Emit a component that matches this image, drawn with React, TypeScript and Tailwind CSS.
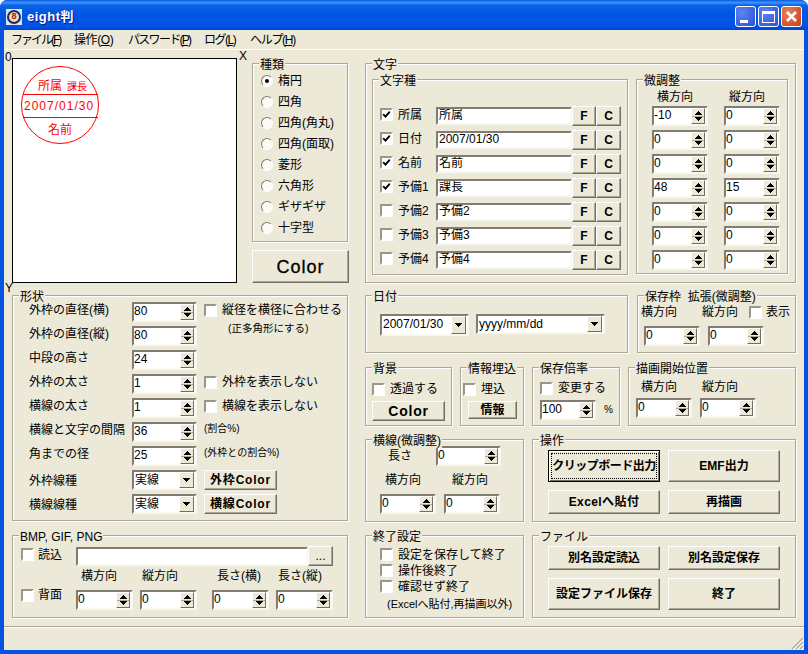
import type { ReactNode } from "react";

const RADIOS = ["楕円", "四角", "四角(角丸)", "四角(面取)", "菱形", "六角形", "ギザギザ", "十字型"];

const TEXT_ROWS = [
  { label: "所属", value: "所属", on: true, x: "-10", y: "0" },
  { label: "日付", value: "2007/01/30", on: true, x: "0", y: "0" },
  { label: "名前", value: "名前", on: true, x: "0", y: "0" },
  { label: "予備1", value: "課長", on: true, x: "48", y: "15" },
  { label: "予備2", value: "予備2", on: false, x: "0", y: "0" },
  { label: "予備3", value: "予備3", on: false, x: "0", y: "0" },
  { label: "予備4", value: "予備4", on: false, x: "0", y: "0" },
];

const SHAPE_ROWS = [
  { label: "外枠の直径(横)", value: "80" },
  { label: "外枠の直径(縦)", value: "80" },
  { label: "中段の高さ", value: "24" },
  { label: "外枠の太さ", value: "1" },
  { label: "横線の太さ", value: "1" },
  { label: "横線と文字の間隔", value: "36" },
  { label: "角までの径", value: "25" },
];

function Group({ title, className, children }: { title: string; className: string; children?: ReactNode }) {
  return (
    <div className={`relative shrink-0 border border-[#aca899] shadow-[inset_1px_1px_0_#fff,1px_1px_0_#fff] ${className}`}>
      <span className="absolute left-[6px] top-[-6px] bg-[#ece9d8] px-[1px] whitespace-pre">{title}</span>
      {children}
    </div>
  );
}

function Checkbox({ on = false, className = "" }: { on?: boolean; className?: string }) {
  return (
    <span className={`block h-[13px] w-[13px] shrink-0 border-2 border-t-[#9a978a] border-l-[#9a978a] border-r-white border-b-white bg-white ${className}`}>
      {on && (
        <svg width="9" height="9" viewBox="0 0 9 9" className="block">
          <path d="M1.2 4.2 L3.5 6.6 L7.8 1.6" fill="none" stroke="#000" strokeWidth="1.9" />
        </svg>
      )}
    </span>
  );
}

function Radio({ on = false }: { on?: boolean }) {
  return (
    <span className="flex h-[12px] w-[12px] shrink-0 items-center justify-center rounded-full border border-t-[#807d70] border-l-[#807d70] border-r-white border-b-white bg-[#fbfaf5]">
      {on && <span className="h-[4px] w-[4px] rounded-full bg-black" />}
    </span>
  );
}

function Btn({ className, children }: { className: string; children: ReactNode }) {
  return (
    <div className={`flex shrink-0 items-center justify-center whitespace-nowrap border border-t-white border-l-white border-r-[#716f64] border-b-[#716f64] bg-[#ece9d8] font-bold shadow-[inset_-1px_-1px_0_#aca899] ${className}`}>
      {children}
    </div>
  );
}

function SpinArrows() {
  return (
    <div className="mr-[1px] w-[14px] shrink-0 border border-t-white border-l-white border-r-[#716f64] border-b-[#716f64] bg-[#ece9d8]">
      <svg width="12" height="14" viewBox="0 0 12 14" className="block" shapeRendering="crispEdges">
        <path d="M6 2 L7 2 L7 3 L8 3 L8 4 L9 4 L9 5 L10 5 L10 6 L3 6 L3 5 L4 5 L4 4 L5 4 L5 3 L6 3 Z" fill="#000" />
        <rect x="0" y="6.5" width="12" height="1" fill="#aca899" />
        <path d="M3 8 L10 8 L10 9 L9 9 L9 10 L8 10 L8 11 L7 11 L7 12 L6 12 L6 11 L5 11 L5 10 L4 10 L4 9 L3 9 Z" fill="#000" />
      </svg>
    </div>
  );
}

function ComboArrow() {
  return (
    <div className="mr-[1px] flex w-[15px] shrink-0 items-center justify-center border border-t-white border-l-white border-r-[#716f64] border-b-[#716f64] bg-[#ece9d8]">
      <svg width="7" height="4" viewBox="0 0 7 4" shapeRendering="crispEdges">
        <path d="M0 0 L7 0 L7 1 L6 1 L6 2 L5 2 L5 3 L4 3 L4 4 L3 4 L3 3 L2 3 L2 2 L1 2 L1 1 L0 1 Z" fill="#000" />
      </svg>
    </div>
  );
}

function Box({ value, className, children, pad = "pl-[0px]" }: { value: string; className: string; children?: ReactNode; pad?: string }) {
  return (
    <div className={`flex shrink-0 border-2 border-t-[#807d70] border-l-[#807d70] border-r-[#f8f7f0] border-b-[#f8f7f0] bg-white ${className}`}>
      <span className={`flex-1 overflow-hidden whitespace-nowrap ${pad}`}>{value}</span>
      {children}
    </div>
  );
}

function Spin({ value, w = "w-[56px]", className = "" }: { value: string; w?: string; className?: string }) {
  return (
    <Box value={value} className={`h-[20px] ${w} ${className}`}>
      <SpinArrows />
    </Box>
  );
}

function Combo({ value, className }: { value: string; className: string }) {
  return (
    <Box value={value} className={className} pad="pl-[1px] pt-[1px]">
      <ComboArrow />
    </Box>
  );
}

function Stamp() {
  return (
    <svg width="223" height="223" viewBox="0 0 223 223" className="block">
      <circle cx="47" cy="46" r="38.5" fill="none" stroke="#f00" strokeWidth="1" />
      <path d="M9.5 35.5 H84.5 M9.5 58.5 H84.5" stroke="#f00" strokeWidth="1" shapeRendering="crispEdges" />
      <g fill="#f00">
        <text x="25" y="31" fontSize="12">所属</text>
        <text x="54" y="31" fontSize="10">課長</text>
        <text x="11" y="51" fontSize="12" letterSpacing="1">2007/01/30</text>
        <text x="35" y="75" fontSize="12">名前</text>
      </g>
    </svg>
  );
}

function TitleBar() {
  return (
    <div className="flex h-[30px] shrink-0 items-center justify-between rounded-t-[7px] bg-[linear-gradient(180deg,#0a5be0_0%,#3d95ff_9%,#0a63e6_17%,#0054e3_50%,#0055e5_85%,#0045d3_100%)] pl-[6px] pr-[6px] pt-[3px]">
      <div className="flex items-center gap-[5px]">
        <div className="flex h-[16px] w-[16px] items-center justify-center bg-[#dfe3ee]">
          <span className="flex h-[14px] w-[14px] items-center justify-center rounded-full border-2 border-[#1c2a66] bg-[#f3d9c0] text-[9px] leading-none font-bold text-[#a02010]">8</span>
        </div>
        <span className="text-[13px] font-bold tracking-[0.5px] text-white [text-shadow:1px_1px_0_#0f1089]">eight判</span>
      </div>
      <div className="flex gap-[2px]">
        <div className="relative h-[21px] w-[21px] rounded-[3px] border border-white bg-[radial-gradient(circle_at_30%_30%,#5d86ee,#2a4fd6)]">
          <span className="absolute bottom-[3px] left-[4px] h-[3px] w-[8px] bg-white" />
        </div>
        <div className="flex h-[21px] w-[21px] items-center justify-center rounded-[3px] border border-white bg-[radial-gradient(circle_at_30%_30%,#5d86ee,#2a4fd6)]">
          <span className="h-[12px] w-[13px] border border-t-[3px] border-white" />
        </div>
        <div className="flex h-[21px] w-[21px] items-center justify-center rounded-[3px] border border-white bg-[radial-gradient(circle_at_30%_30%,#e9825c,#c83c14)]">
          <svg width="13" height="13" viewBox="0 0 13 13">
            <path d="M2 2 L11 11 M11 2 L2 11" stroke="#fff" strokeWidth="2.6" />
          </svg>
        </div>
      </div>
    </div>
  );
}

function MenuBar() {
  return (
    <div className="flex h-[20px] shrink-0 items-center border-b border-white pl-[7px]">
      <span className="w-[63px] whitespace-nowrap tracking-[-2px]">ファイル(<u>F</u>)</span>
      <span className="w-[54px] whitespace-nowrap tracking-[-0.4px]">操作(<u>O</u>)</span>
      <span className="w-[76px] whitespace-nowrap tracking-[-1.7px]">パスワード(<u>P</u>)</span>
      <span className="w-[46px] whitespace-nowrap tracking-[-1.5px]">ログ(<u>L</u>)</span>
      <span className="whitespace-nowrap tracking-[-1.3px]">ヘルプ(<u>H</u>)</span>
    </div>
  );
}

function LeftColumn() {
  return (
    <div className="w-[336px] shrink-0 pt-[8px]">
      <div className="flex items-start gap-[15px]">
        <div className="relative h-[225px] w-[225px] border border-black bg-white">
          <span className="absolute left-[-8px] top-[-9px]">0</span>
          <span className="absolute left-[226px] top-[-10px]">X</span>
          <span className="absolute left-[-8px] top-[222px]">Y</span>
          <Stamp />
        </div>
        <div className="w-[97px] pt-[5px]">
          <Group title="種類" className="h-[179px] w-[96px] pl-[8px] pt-[6px]">
            {RADIOS.map((r, i) => (
              <div key={r} className="flex h-[21px] items-center gap-[5px] whitespace-nowrap">
                <Radio on={i === 0} />
                <span>{r}</span>
              </div>
            ))}
          </Group>
          <Btn className="mt-[8px] h-[33px] w-[97px] text-[18px] !font-normal tracking-[1px] [-webkit-text-stroke:0.3px_black]">Color</Btn>
        </div>
      </div>

      <Group title="形状" className="mt-[12px] h-[226px] w-[336px] pl-[16px] pt-[6px]">
        {SHAPE_ROWS.map((r, i) => (
          <div key={i} className="flex h-[24px] items-start">
            <span className="mt-[1px] w-[103px] whitespace-nowrap">{r.label}</span>
            <Spin value={r.value} w="w-[65px]" />
            <div className="ml-[7px] flex items-start gap-[5px] whitespace-nowrap">
              {i === 0 && <><Checkbox className="mt-[2px]" /><span className="mt-[1px]">縦径を横径に合わせる</span></>}
              {i === 1 && <span className="-mt-[5px] ml-[24px] text-[10.5px]">(正多角形にする)</span>}
              {i === 3 && <><Checkbox className="mt-[2px]" /><span className="mt-[1px]">外枠を表示しない</span></>}
              {i === 4 && <><Checkbox className="mt-[2px]" /><span className="mt-[1px]">横線を表示しない</span></>}
              {i === 5 && <span className="text-[10px]">(割合%)</span>}
              {i === 6 && <span className="text-[10px]">(外枠との割合%)</span>}
            </div>
          </div>
        ))}
        <div className="flex h-[24px] items-start">
          <span className="mt-[4px] w-[103px] whitespace-nowrap">外枠線種</span>
          <Combo value="実線" className="h-[20px] w-[65px]" />
          <Btn className="ml-[7px] h-[20px] w-[73px] tracking-[0.8px]">外枠Color</Btn>
        </div>
        <div className="flex h-[24px] items-start">
          <span className="mt-[4px] w-[103px] whitespace-nowrap">横線線種</span>
          <Combo value="実線" className="h-[20px] w-[65px]" />
          <Btn className="ml-[7px] h-[20px] w-[73px] tracking-[0.8px]">横線Color</Btn>
        </div>
      </Group>

      <Group title="BMP, GIF, PNG" className="mt-[14px] h-[83px] w-[336px] pl-[8px] pt-[10px]">
        <div className="flex items-start">
          <Checkbox className="mt-[2px]" />
          <span className="ml-[4px] mt-[2px] w-[38px]">読込</span>
          <Box value="" className="mt-[1px] h-[19px] w-[232px]" />
          <Btn className="h-[20px] w-[25px] !font-normal">...</Btn>
        </div>
        <div className="mt-[3px] flex items-start">
          <div className="flex w-[55px] items-start pt-[20px]">
            <Checkbox />
            <span className="ml-[4px] mt-[-1px]">背面</span>
          </div>
          <div className="w-[64px]">
            <div className="h-[14px] pl-[5px]">横方向</div>
            <Spin value="0" className="mt-[7px] w-[57px]" w="" />
          </div>
          <div className="w-[72px]">
            <div className="h-[14px] pl-[2px]">縦方向</div>
            <Spin value="0" className="mt-[7px] w-[57px]" w="" />
          </div>
          <div className="w-[64px]">
            <div className="h-[14px] whitespace-nowrap pl-[5px]">長さ(横)</div>
            <Spin value="0" className="mt-[7px] w-[57px]" w="" />
          </div>
          <div className="w-[57px]">
            <div className="h-[14px] whitespace-nowrap pl-[2px]">長さ(縦)</div>
            <Spin value="0" className="mt-[7px] w-[57px]" w="" />
          </div>
        </div>
      </Group>
    </div>
  );
}

function TextGroup() {
  return (
    <Group title="文字" className="flex h-[220px] w-[431px] items-start gap-[8px] pl-[6px] pt-[15px]">
      <Group title="文字種" className="h-[196px] w-[256px] pl-[7px] pt-[26px]">
        {TEXT_ROWS.map((r) => (
          <div key={r.label} className="flex h-[24px] items-start">
            <Checkbox on={r.on} className="mt-[2px]" />
            <span className="ml-[5px] mt-[2px] w-[38px] whitespace-nowrap">{r.label}</span>
            <Box value={r.value} className="mt-[1px] h-[18px] w-[136px]" pad="pl-[1px] leading-[13px]" />
            <Btn className="h-[20px] w-[24px]">F</Btn>
            <Btn className="h-[20px] w-[25px]">C</Btn>
          </div>
        ))}
      </Group>
      <Group title="微調整" className="h-[195px] w-[152px] pl-[15px] pt-[10px]">
        <div className="flex h-[16px]">
          <span className="w-[72px] pl-[5px]">横方向</span>
          <span className="pl-[5px]">縦方向</span>
        </div>
        {TEXT_ROWS.map((r) => (
          <div key={r.label} className="flex h-[24px] items-start gap-[16px]">
            <Spin value={r.x} />
            <Spin value={r.y} />
          </div>
        ))}
      </Group>
    </Group>
  );
}

function RightColumn() {
  return (
    <div className="w-[431px] shrink-0 pt-[13px]">
      <TextGroup />

      <div className="mt-[12px] flex gap-[9px]">
        <Group title="日付" className="h-[58px] w-[263px] pl-[14px] pt-[18px]">
          <div className="flex items-start gap-[7px]">
            <Combo value="2007/01/30" className="h-[22px] w-[89px]" />
            <Combo value="yyyy/mm/dd" className="h-[20px] w-[129px]" />
          </div>
        </Group>
        <Group title="保存枠  拡張(微調整)" className="h-[58px] w-[159px] pl-[3px] pt-[9px]">
          <div className="flex h-[14px] items-center whitespace-nowrap">
            <span className="w-[61px]">横方向</span>
            <span className="w-[47px]">縦方向</span>
            <Checkbox />
            <span className="ml-[4px]">表示</span>
          </div>
          <div className="ml-[3px] mt-[7px] flex gap-[8px]">
            <Spin value="0" />
            <Spin value="0" />
          </div>
        </Group>
      </div>

      <div className="mt-[14px] flex gap-[8px]">
        <Group title="背景" className="h-[59px] w-[87px] pl-[6px] pt-[14px]">
          <div className="flex items-center gap-[5px]">
            <Checkbox />
            <span className="whitespace-nowrap">透過する</span>
          </div>
          <Btn className="mt-[5px] h-[20px] w-[73px] text-[14px] tracking-[0.8px]">Color</Btn>
        </Group>
        <Group title="情報埋込" className="h-[59px] w-[64px] pl-[2px] pt-[14px]">
          <div className="flex items-center gap-[5px]">
            <Checkbox />
            <span className="whitespace-nowrap">埋込</span>
          </div>
          <Btn className="ml-[5px] mt-[5px] h-[18px] w-[49px]">情報</Btn>
        </Group>
        <Group title="保存倍率" className="h-[59px] w-[88px] pl-[7px] pt-[13px]">
          <div className="flex items-center gap-[5px]">
            <Checkbox />
            <span className="whitespace-nowrap">変更する</span>
          </div>
          <div className="mt-[5px] flex items-center gap-[8px]">
            <Spin value="100" />
            <span className="text-[10px]">%</span>
          </div>
        </Group>
        <Group title="描画開始位置" className="h-[59px] w-[168px] pl-[7px] pt-[12px]">
          <div className="flex h-[14px]">
            <span className="w-[64px] pl-[5px]">横方向</span>
            <span className="pl-[2px]">縦方向</span>
          </div>
          <div className="mt-[4px] flex gap-[8px]">
            <Spin value="0" />
            <Spin value="0" />
          </div>
        </Group>
      </div>

      <div className="mt-[13px] flex gap-[8px]">
        <Group title="横線(微調整)" className="h-[83px] w-[159px] pl-[14px] pt-[6px]">
          <div className="flex items-center">
            <span className="w-[56px] pl-[8px]">長さ</span>
            <Spin value="0" w="w-[65px]" />
          </div>
          <div className="mt-[7px] flex h-[14px]">
            <span className="w-[72px] pl-[5px]">横方向</span>
            <span>縦方向</span>
          </div>
          <div className="mt-[7px] flex gap-[8px]">
            <Spin value="0" />
            <Spin value="0" />
          </div>
        </Group>
        <Group title="操作" className="h-[83px] w-[264px] pl-[15px] pt-[10px]">
          <div className="grid w-[232px] grid-cols-2 gap-[8px]">
            <div className="flex h-[32px] items-center justify-center border border-black bg-[#ece9d8] font-bold shadow-[inset_1px_1px_0_#fff,inset_-1px_-1px_0_#716f64]">
              <span className="flex h-[26px] w-[106px] items-center justify-center whitespace-nowrap border border-dotted border-black tracking-[-0.5px]">クリップボード出力</span>
            </div>
            <Btn className="h-[32px]">EMF出力</Btn>
            <Btn className="h-[24px] tracking-[0.4px]">Excelへ貼付</Btn>
            <Btn className="h-[24px]">再描画</Btn>
          </div>
        </Group>
      </div>

      <div className="mt-[13px] flex gap-[8px]">
        <Group title="終了設定" className="h-[83px] w-[159px] pl-[14px] pt-[12px]">
          {["設定を保存して終了", "操作後終了", "確認せず終了"].map((t) => (
            <div key={t} className="flex h-[16px] items-start gap-[5px] whitespace-nowrap">
              <Checkbox />
              <span>{t}</span>
            </div>
          ))}
          <div className="ml-[7px] mt-[1px] whitespace-nowrap text-[11px]">(Excelへ貼付,再描画以外)</div>
        </Group>
        <Group title="ファイル" className="h-[83px] w-[264px] pl-[15px] pt-[10px]">
          <div className="grid w-[232px] grid-cols-2 gap-[8px]">
            <Btn className="h-[24px]">別名設定読込</Btn>
            <Btn className="h-[24px]">別名設定保存</Btn>
            <Btn className="h-[32px]">設定ファイル保存</Btn>
            <Btn className="h-[32px]">終了</Btn>
          </div>
        </Group>
      </div>
    </div>
  );
}

export default function App() {
  return (
    <div className="flex h-[654px] w-[808px] flex-col overflow-hidden rounded-t-[7px] bg-[#0553e2] text-[12px] leading-[14px] text-black [font-family:'Liberation_Sans','Noto_Sans_CJK_JP',sans-serif]">
      <TitleBar />
      <div className="mx-[4px] mb-[4px] flex flex-1 flex-col bg-[#ece9d8]">
        <MenuBar />
        <div className="flex flex-1 gap-[17px] pl-[8px]">
          <LeftColumn />
          <RightColumn />
        </div>
        <div className="flex h-[24px] shrink-0 items-end justify-end border-t border-[#aca899] shadow-[inset_0_1px_0_#fff]">
          <svg width="14" height="14" viewBox="0 0 14 14">
            <path d="M13 2 L2 13 M13 6 L6 13 M13 10 L10 13" stroke="#aca899" strokeWidth="1.2" />
            <path d="M14 3 L3 14 M14 7 L7 14 M14 11 L11 14" stroke="#fff" strokeWidth="1" />
          </svg>
        </div>
      </div>
    </div>
  );
}
